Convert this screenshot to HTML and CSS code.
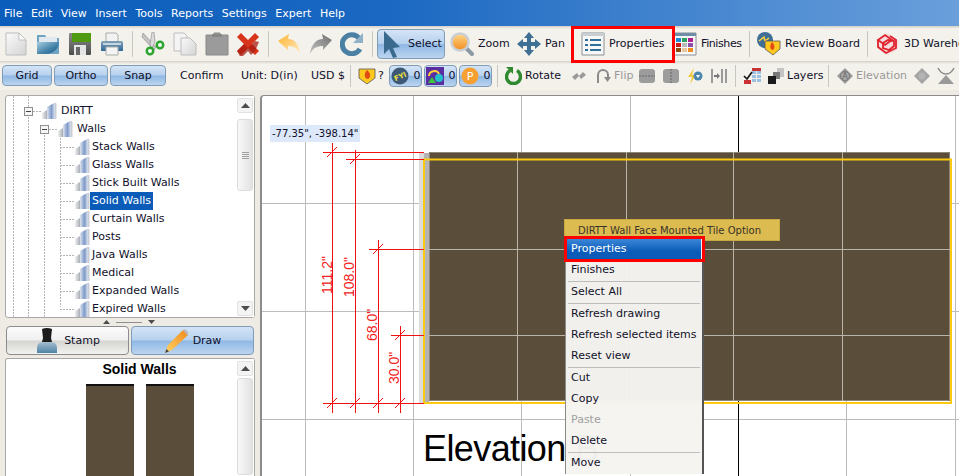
FILE: index.html
```html
<!DOCTYPE html>
<html lang="en">
<head>
<meta charset="utf-8">
<title>ICE Elevation</title>
<link rel="stylesheet" href="styles.css">
</head>
<body>
<svg class="defs" width="0" height="0" aria-hidden="true">
  <defs>
    <linearGradient id="page" x1="0" y1="0" x2="1" y2="1"><stop offset="0" stop-color="#fafafa"/><stop offset="1" stop-color="#d4d4d4"/></linearGradient>
    <linearGradient id="folder" x1="0" y1="0" x2="1" y2="1"><stop offset="0" stop-color="#a9cde0"/><stop offset=".6" stop-color="#3f7fa6"/><stop offset="1" stop-color="#1f5f8a"/></linearGradient>
    <linearGradient id="floppy" x1="0" y1="0" x2="0" y2="1"><stop offset="0" stop-color="#8a8a8a"/><stop offset="1" stop-color="#4e4e4e"/></linearGradient>
    <linearGradient id="steel" x1="0" y1="0" x2="0" y2="1"><stop offset="0" stop-color="#7f9fb8"/><stop offset="1" stop-color="#2f6a96"/></linearGradient>
    <linearGradient id="undo" x1="0" y1="0" x2="1" y2="1"><stop offset="0" stop-color="#ffb52e"/><stop offset="1" stop-color="#ffe9c4"/></linearGradient>
    <linearGradient id="redo" x1="1" y1="0" x2="0" y2="1"><stop offset="0" stop-color="#6e6e6e"/><stop offset="1" stop-color="#c4c4c4"/></linearGradient>
    <linearGradient id="glass" x1="0" y1="0" x2="0" y2="1"><stop offset="0" stop-color="#ffd98a"/><stop offset="1" stop-color="#f28a1e"/></linearGradient>
    <linearGradient id="wallic" x1="0" y1="0" x2="1" y2="0"><stop offset="0" stop-color="#dfe5ee"/><stop offset=".55" stop-color="#7f9aca"/><stop offset="1" stop-color="#dde3ec"/></linearGradient>
    <linearGradient id="walllow" x1="0" y1="0" x2="1" y2="0"><stop offset="0" stop-color="#f0f0f0"/><stop offset="1" stop-color="#a8adb5"/></linearGradient>
    <linearGradient id="pencil" x1="0" y1="1" x2="1" y2="0"><stop offset="0" stop-color="#ffd466"/><stop offset="1" stop-color="#f08a1a"/></linearGradient>
    <linearGradient id="stampbase" x1="0" y1="0" x2="0" y2="1"><stop offset="0" stop-color="#a4bdd0"/><stop offset="1" stop-color="#4f84a6"/></linearGradient>
    <symbol id="wall" viewBox="0 0 16 18">
      <path d="M1 17v-6l5-3v9z" fill="url(#walllow)"/>
      <path d="M6 17V5l8-4.500V17z" fill="url(#wallic)"/>
      <path d="M14 .5V17h1.500V1.500z" fill="#c9ced6"/>
    </symbol>
    <symbol id="upar" viewBox="0 0 9 5"><path d="M0 5 4.500 0 9 5z" fill="#4d4d4d"/></symbol>
    <symbol id="dnar" viewBox="0 0 9 5"><path d="M0 0h9L4.500 5z" fill="#4d4d4d"/></symbol>
  </defs>
</svg>

<div class="app">
  <nav class="menubar">
    <span>File</span><span>Edit</span><span>View</span><span>Insert</span><span>Tools</span><span>Reports</span><span>Settings</span><span>Expert</span><span>Help</span>
  </nav>

  <div class="toolbar tb-main">
    <div class="cell"><svg width="24" height="24" viewBox="0 0 24 24"><path d="M2 1h13l7 7v15H2z" fill="url(#page)" stroke="#bdbdbd"/><path d="M15 1v7h7z" fill="#fff" stroke="#bdbdbd"/></svg></div>
    <div class="cell"><svg width="24" height="24" viewBox="0 0 24 24"><path d="M1 3h8l2 3h12v16H1z" fill="#6fa3c4"/><path d="M3 5h18v6H3z" fill="#dfe9ef"/><path d="M1 22V10h22c0 6-5 12-14 12z" fill="url(#folder)"/></svg></div>
    <div class="cell"><svg width="24" height="24" viewBox="0 0 24 24"><path d="M1 2q0-1 1-1h21v21q0 1-1 1H2q-1 0-1-1z" fill="url(#floppy)"/><path d="M4 1h19v9H4z" fill="#4f9a10"/><path d="M6 13h12v10H6z" fill="#e4e4e4"/><path d="M8 15h4v8H8z" fill="#666"/></svg></div>
    <div class="cell"><svg width="24" height="24" viewBox="0 0 24 24"><path d="M6 1h10l2 2v8H6z" fill="#f2f2f2" stroke="#aaa"/><path d="M1 11q0-2 2-2h18q2 0 2 2v8H1z" fill="url(#steel)"/><path d="M6 15h12v8H6z" fill="#f4f4f4" stroke="#aaa"/><path d="M3 11h18v2H3z" fill="#c7d7e2"/></svg></div>
    <div class="cell"><i class="sep"></i></div>
    <div class="cell"><svg width="24" height="24" viewBox="0 0 24 24"><path d="M2 1 15 15l-2 3L1 5z" fill="#c4c4c4" stroke="#888" stroke-width=".6"/><path d="M11 0l2 0 1 10-3 6-2-3z" fill="#dcdcdc" stroke="#888" stroke-width=".6"/><circle cx="9" cy="19" r="3.200" fill="#fff" stroke="#2ea52e" stroke-width="2.500"/><circle cx="19" cy="13" r="3.200" fill="#fff" stroke="#2ea52e" stroke-width="2.500"/></svg></div>
    <div class="cell"><svg width="24" height="24" viewBox="0 0 24 24"><path d="M1 1h10l3 3v15H1z" fill="#f4f4f4" stroke="#bdbdbd"/><path d="M8 6h9l6 6v11H8z" fill="url(#page)" stroke="#bdbdbd"/></svg></div>
    <div class="cell"><svg width="24" height="24" viewBox="0 0 24 24"><path d="M1 3h8V1h6v2h8v20H1z" fill="#9b9b9b" stroke="#8a8a8a"/><path d="M7 2h10v3H7z" fill="#888"/></svg></div>
    <div class="cell"><svg width="24" height="24" viewBox="0 0 24 24"><path d="M1 5 5 1l7 7 7-7 4 4-7 7 7 7-4 4-7-7-7 7-4-4 7-7z" fill="#d8341c"/><path d="M1 19l7-7 4 4 7-7 4 1-4 9-4 4-3-4-7 7z" fill="#a81c10" opacity=".75"/></svg></div>
    <div class="cell"><i class="sep"></i></div>
    <div class="cell"><svg width="24" height="24" viewBox="0 0 24 24"><path d="M1 9 12 2l-1 5c7 0 11 6 12 15-3-6-6-8-12-8v4z" fill="url(#undo)"/></svg></div>
    <div class="cell"><svg width="24" height="24" viewBox="0 0 24 24"><path d="M23 8 13 2l1 5C7 7 2 13 1 22c3-6 7-8 13-8v4z" fill="url(#redo)"/></svg></div>
    <div class="cell"><svg width="24" height="24" viewBox="0 0 24 24"><path d="M20 17a9.500 9.500 0 1 1-1-11" fill="none" stroke="#4a80a4" stroke-width="5"/><path d="M23 1v10H13z" fill="#8fb2c8"/></svg></div>
    <div class="cell"><i class="sep"></i></div>
    <div class="cell"><div class="btn btn-select"><svg width="22" height="28" viewBox="0 0 22 28"><path d="M4 1 20 17l-7 1 4 9-4 1-4-9-5 5z" fill="#3a6a8e"/></svg><span>Select</span></div></div>
    <div class="cell tool"><svg width="24" height="24" viewBox="0 0 24 24"><path d="M15 15l7 7" stroke="#8c9aa6" stroke-width="4" stroke-linecap="round"/><circle cx="10" cy="10" r="8.500" fill="url(#glass)" stroke="#c9cfd4" stroke-width="2.500"/></svg><span>Zoom</span></div>
    <div class="cell tool"><svg width="24" height="24" viewBox="0 0 24 24"><g fill="#3d7094"><path d="M12 0l5 6H7z"/><path d="M12 24l-5-6h10z"/><path d="M0 12l6-5v10z"/><path d="M24 12l-6 5V7z"/><path d="M6 10h12v4H6z"/><path d="M10 6h4v12h-4z"/></g></svg><span>Pan</span></div>
    <div class="cell tool"><svg width="24" height="24" viewBox="0 0 24 24"><path d="M1 1h22v22H1z" fill="#f7f7f7" stroke="#8a8f94"/><path d="M1 1h22v3H1z" fill="#c9ced3"/><g fill="#2f6f9a"><path d="M4 7h3v2H4zM9 7h11v2H9zM4 12h3v2H4zM9 12h11v2H9zM4 17h3v2H4zM9 17h11v2H9z"/></g></svg><span>Properties</span></div>
    <div class="cell tool"><svg width="24" height="24" viewBox="0 0 24 24"><path d="M0 1h23v22H0z" fill="#f7f7f7" stroke="#8a8f94"/><path d="M1 1h22v3H1z" fill="#6f8ea6"/><path d="M3 6h5v4H3z" fill="#1e88d0"/><path d="M9 6h5v4H9z" fill="#30a060"/><path d="M15 6h5v4h-5z" fill="#b01e90"/><path d="M3 11h5v4H3z" fill="#c81818"/><path d="M9 11h5v4H9z" fill="#b8b8b8"/><path d="M15 11h5v4h-5z" fill="#8a4fa8"/><path d="M3 16h5v4H3z" fill="#8a4a10"/><path d="M9 16h5v4H9z" fill="#e8c8a0"/><path d="M15 16h5v4h-5z" fill="#f08a20"/></svg><span class="tight">Finishes</span></div>
    <div class="cell"><i class="sep"></i></div>
    <div class="cell tool"><svg width="24" height="24" viewBox="0 0 24 24"><circle cx="8" cy="8" r="8" fill="#3f6f96"/><path d="M2 9l5-4 1 4 4-3" fill="none" stroke="#ffd23c" stroke-width="1.500"/><path d="M8 9h15v8l-7 6-8-6z" fill="#ffc81e" stroke="#555" stroke-width=".8"/><path d="M15 10c3 3 3 6 1 8-3 0-4-4-1-8z" fill="#e04a14"/></svg><span>Review Board</span></div>
    <div class="cell"><i class="sep"></i></div>
    <div class="cell tool"><svg width="24" height="24" viewBox="0 0 24 24"><path d="M1 8 12 1l11 8-2 9-10 5-9-6z" fill="#f6dcdc"/><g fill="none" stroke="#e0202a" stroke-width="1.800"><path d="M2 8 9 3l7 5-7 5z"/><path d="M2 8v7l8 6 10-5V8l-6-4"/><path d="M7 11v5l6 2 5-4v-5l-6-1-5 3"/></g></svg><span>3D Warehouse</span></div>
  </div>

  <div class="toolbar tb-sub">
    <div class="cell"><div class="btn btn-grid">Grid</div></div>
    <div class="cell"><div class="btn btn-ortho">Ortho</div></div>
    <div class="cell"><div class="btn btn-snap">Snap</div></div>
    <div class="cell">Confirm</div>
    <div class="cell">Unit: D(in)</div>
    <div class="cell">USD $</div>
    <div class="cell"><i class="sep"></i></div>
    <div class="cell"><svg width="18" height="18" viewBox="0 0 18 18"><path d="M1 2h16v9l-8 6-8-6z" fill="#ffc81e" stroke="#555" stroke-width=".8"/><path d="M9 3c4 3 4 7 1 9-3 0-5-4-1-9z" fill="#e04a14"/></svg></div>
    <div class="cell">?</div>
    <div class="cell"><div class="btn btn-count"><svg width="18" height="18" viewBox="0 0 18 18"><circle cx="9" cy="9" r="8.500" fill="#3c5a78"/><text x="9" y="12" class="fyi" transform="rotate(-25 9 9)">FYI</text></svg><span>0</span></div></div>
    <div class="cell"><div class="btn btn-count"><svg width="18" height="18" viewBox="0 0 18 18"><path d="M0 0h18v18H0z" fill="#5a2da0"/><path d="M3 9c0-5 8-7 10-2" fill="none" stroke="#ffd23c" stroke-width="2"/><path d="M2 16l4-6 4 6z" fill="#3cc43c"/><circle cx="13" cy="11" r="4" fill="#22c0c8"/></svg><span>0</span></div></div>
    <div class="cell"><div class="btn btn-count"><svg width="18" height="18" viewBox="0 0 18 18"><circle cx="9" cy="9" r="8.500" fill="#f5a030"/><text x="9" y="13" class="pt">P</text></svg><span>0</span></div></div>
    <div class="cell"><i class="sep"></i></div>
    <div class="cell tool tool-sm"><svg width="17" height="18" viewBox="0 0 17 18"><path d="M12 3.500a7 7 0 1 1-7 0" fill="none" stroke="#2f8a2f" stroke-width="3.500"/><path d="M1 0h7v7z" fill="#2f8a2f"/></svg><span>Rotate</span></div>
    <div class="cell"><svg width="16" height="16" viewBox="0 0 16 16"><g fill="#9a9a9a"><path d="M1 9l5-4 2 3-4 4z"/><path d="M15 7l-5 4-2-3 4-4z"/></g></svg></div>
    <div class="cell tool tool-sm muted"><svg width="16" height="18" viewBox="0 0 16 18"><path d="M3 16V8a5 5 0 0 1 10 0v3" fill="none" stroke="#8a8a8a" stroke-width="2"/><path d="M9 10h7l-3.500 5z" fill="#8a8a8a"/></svg><span>Flip</span></div>
    <div class="cell"><svg width="16" height="16" viewBox="0 0 16 16"><rect x="0" y="1" width="16" height="14" rx="3" fill="#9c9c9c"/><path d="M0 8h16" stroke="#666" stroke-dasharray="2 1"/></svg></div>
    <div class="cell"><svg width="16" height="16" viewBox="0 0 16 16"><rect x="0" y="1" width="16" height="14" rx="3" fill="#9c9c9c"/><path d="M8 1v14" stroke="#666" stroke-dasharray="2 1"/></svg></div>
    <div class="cell"><svg width="16" height="16" viewBox="0 0 16 16"><path d="M7 0 1 9h4l-2 7 6-9H5z" fill="#f5c83c"/><circle cx="11" cy="8" r="4.500" fill="#4c86ad"/><path d="M9 7h4l-2 3z" fill="#fff"/></svg></div>
    <div class="cell"><svg width="16" height="16" viewBox="0 0 16 16"><path d="M1 1v14M11 1v14M15 1v14" stroke="#9a9a9a" stroke-width="2"/><path d="M3 7h3V5l3 3-3 3V9H3z" fill="#777"/></svg></div>
    <div class="cell"><i class="sep"></i></div>
    <div class="cell"><svg width="18" height="18" viewBox="0 0 18 18"><g fill="#9cc0e4"><path d="M9 4h4v3H9zM14 4h4v3h-4zM9 8h4v3H9zM14 8h4v3h-4zM9 12h4v3H9zM14 12h4v3h-4z"/></g><path d="M9 1h9v3H9zM1 13h7v4H1zM14 1h4v3h-4z" fill="#c83232"/><path d="M1 9l3 3 5-7" fill="none" stroke="#111" stroke-width="1.600"/></svg></div>
    <div class="cell tool tool-sm"><svg width="16" height="18" viewBox="0 0 16 18"><path d="M9 1h7v9H9z" fill="#c4c4c4"/><path d="M5 5h7v7H5z" fill="#7a7a7a"/><path d="M0 9h8v8H0z" fill="#1a1a1a"/></svg><span>Layers</span></div>
    <div class="cell"><i class="sep"></i></div>
    <div class="cell tool tool-sm muted"><svg width="16" height="16" viewBox="0 0 16 16"><path d="M8 0l8 8-8 8-8-8z" fill="#9c9c9c"/><circle cx="8" cy="8" r="4.500" fill="#aaa" stroke="#777"/><text x="8" y="11" class="elv">A</text></svg><span>Elevation</span></div>
    <div class="cell"><svg width="16" height="16" viewBox="0 0 16 16"><path d="M8 0l8 8-8 8-8-8z" fill="#a4a4a4"/><circle cx="8" cy="8" r="3.500" fill="#b4b4b4"/></svg></div>
    <div class="cell"><svg width="18" height="18" viewBox="0 0 18 18"><path d="M1 1c2 4 5 6 8 6s6-2 8-6" fill="none" stroke="#8a8a8a" stroke-width="1.500"/><path d="M9 8l8 9H1z" fill="#9a9a9a"/></svg></div>
  </div>

  <main class="workspace">
    <aside class="side">
      <section class="panel tree-panel">
        <div class="tree">
          <div class="row row-1"><i class="exp"></i><i class="dash"></i><svg class="ti" width="16" height="18"><use href="#wall"/></svg><span>DIRTT</span></div>
          <div class="row row-2"><i class="exp"></i><i class="dash"></i><svg class="ti" width="16" height="18"><use href="#wall"/></svg><span>Walls</span></div>
          <div class="row row-3"><i class="dash"></i><svg class="ti" width="16" height="18"><use href="#wall"/></svg><span>Stack Walls</span></div>
          <div class="row row-3"><i class="dash"></i><svg class="ti" width="16" height="18"><use href="#wall"/></svg><span>Glass Walls</span></div>
          <div class="row row-3"><i class="dash"></i><svg class="ti" width="16" height="18"><use href="#wall"/></svg><span>Stick Built Walls</span></div>
          <div class="row row-3"><i class="dash"></i><svg class="ti" width="16" height="18"><use href="#wall"/></svg><span class="sel">Solid Walls</span></div>
          <div class="row row-3"><i class="dash"></i><svg class="ti" width="16" height="18"><use href="#wall"/></svg><span>Curtain Walls</span></div>
          <div class="row row-3"><i class="dash"></i><svg class="ti" width="16" height="18"><use href="#wall"/></svg><span>Posts</span></div>
          <div class="row row-3"><i class="dash"></i><svg class="ti" width="16" height="18"><use href="#wall"/></svg><span>Java Walls</span></div>
          <div class="row row-3"><i class="dash"></i><svg class="ti" width="16" height="18"><use href="#wall"/></svg><span>Medical</span></div>
          <div class="row row-3"><i class="dash"></i><svg class="ti" width="16" height="18"><use href="#wall"/></svg><span>Expanded Walls</span></div>
          <div class="row row-3"><i class="dash"></i><svg class="ti" width="16" height="18"><use href="#wall"/></svg><span>Expired Walls</span></div>
        </div>
        <div class="scrollbar">
          <div class="sb-btn"><svg width="9" height="5"><use href="#upar"/></svg></div>
          <div class="sb-thumb sb-thumb-tree"><i></i><i></i><i></i><i></i></div>
          <div class="sb-track"></div>
          <div class="sb-btn"><svg width="9" height="5"><use href="#dnar"/></svg></div>
        </div>
      </section>

      <div class="splitter">
        <svg width="7" height="4"><use href="#upar"/></svg><i></i><svg width="7" height="4"><use href="#dnar"/></svg>
      </div>

      <div class="modes">
        <div class="mode"><svg width="24" height="26" viewBox="0 0 24 26"><path d="M7 1q5-2 10 0l-1 9 1 4H7l1-4z" fill="#1c1c1c"/><path d="M2 20q0-6 6-6h8q6 0 6 6v5H2z" fill="url(#stampbase)"/></svg><span>Stamp</span></div>
        <div class="mode mode-on"><svg width="24" height="26" viewBox="0 0 24 26"><path d="M1 25l3-8L19 2l5 5L8 22z" fill="url(#pencil)"/><path d="M19 2l2-1 3 3-0 3-1 0z" fill="#b8b8c0"/><path d="M1 25l1.500-4 2.500 2.500z" fill="#444"/></svg><span>Draw</span></div>
      </div>

      <section class="panel preview">
        <div class="pv-body">
          <h2>Solid Walls</h2>
          <div class="swatches"><div class="swatch"></div><div class="swatch"></div></div>
        </div>
        <div class="scrollbar">
          <div class="sb-btn"><svg width="9" height="5"><use href="#upar"/></svg></div>
          <div class="sb-thumb sb-thumb-pv"></div>
        </div>
      </section>
    </aside>

    <section class="canvas">
      <svg class="drawing" width="699" height="381" viewBox="260 95 699 381">
        <path class="grid" d="M305.500 95v381M413.500 95v381M521.500 95v381M630.500 95v381M846.500 95v381M955.500 95v381M260 203.500h699M260 311.500h699M260 419.500h699"/>
        <path d="M738.500 95v381" class="axis"/>
        <path d="M419 153h5v251h-5z" class="shade"/>
        <path d="M424 153h5v251h-5z" class="shade-in"/>
        <path d="M429 152h521v249H429z" class="wallface"/>
        <path d="M429.500 152.500h520v248h-520z" class="walledge"/>
        <path d="M517.500 152v249M626.500 152v249M733.500 152v249M842.500 152v249M429 249.500h521M429 335.500h521" class="tile"/>
        <path d="M424 159.500h527V403H424z" class="select"/>
        <g class="dims">
          <path d="M323 152.500h101M346 159.500h78M369 249.500h55M391 335.500h33M323 403.500h101"/>
          <path d="M332.500 143v270M355.500 150v263M378.500 240v173M400.500 326v87"/>
          <path d="M327 157l10-10M350 164l10-10M373 254l10-10M395 340l10-10M327 408l10-10M350 408l10-10M373 408l10-10M395 408l10-10"/>
        </g>
        <g class="dimtext">
          <text transform="translate(332 294) rotate(-90)">111.2"</text>
          <text transform="translate(354 297) rotate(-90)">108.0"</text>
          <text transform="translate(377 341) rotate(-90)">68.0"</text>
          <text transform="translate(399 384) rotate(-90)">30.0"</text>
        </g>
        <text x="423" y="461" class="view-title">Elevation B</text>
      </svg>

      <div class="coords">-77.35", -398.14"</div>
      <div class="hint">DIRTT Wall Face Mounted Tile Option</div>

      <ul class="menu">
        <li class="active">Properties</li>
        <li>Finishes</li>
        <li class="line"></li>
        <li>Select All</li>
        <li class="line"></li>
        <li>Refresh drawing</li>
        <li>Refresh selected items</li>
        <li>Reset view</li>
        <li class="line"></li>
        <li>Cut</li>
        <li>Copy</li>
        <li class="off">Paste</li>
        <li>Delete</li>
        <li class="line"></li>
        <li>Move</li>
      </ul>
    </section>
  </main>

  <div class="callout callout-tool"></div>
  <div class="callout callout-menu"></div>
</div>
</body>
</html>
```

FILE: styles.css
```css
* { box-sizing: border-box; }
html, body { margin: 0; padding: 0; }
body { background: #eeebe4; font: 11px "DejaVu Sans", sans-serif; color: #10102a; }
.defs { position: absolute; }
.app { position: relative; width: 959px; height: 476px; overflow: hidden; display: flex; flex-direction: column; }

.menubar {
  height: 26px; flex: none; display: flex; align-items: center; padding-left: 4px; gap: 8.5px; color: #fff;
  background: linear-gradient(90deg, #0a5dbb 0%, #1a68c2 40%, #6a9fdb 100%);
}

.toolbar { display: grid; flex: none; align-items: center; background: linear-gradient(#d2d0c8 0, #f4f2ec 3px, #f3f1ea 100%); overflow: hidden; }
.tb-main {
  height: 35px; padding-left: 4px;
  grid-template-columns: 32px 32px 32px 32px 9px 32px 32px 31px 32px 9px 32px 31px 32px 5px 73px 67px 64px 92px 76px 8px 110px 9px 140px;
}
.tb-sub {
  height: 29px; padding-left: 2px;
  grid-template-columns: 52px 56px 70px 61px 70px 39px 8px 20px 11px 35px 35px 38px 8px 66px 24px 44px 24px 24px 24px 24px 8px 25px 60px 9px 77px 23px 22px;
}
.cell { display: flex; align-items: center; white-space: nowrap; min-width: 0; }
.sep { display: block; width: 1px; height: 26px; background: #c9c6bd; }
.tb-sub .sep { height: 22px; }
.tool { gap: 4px; }
.tool-sm { gap: 3px; }
.tight { letter-spacing: -.4px; }
.muted { color: #999; }

.btn {
  display: flex; align-items: center; justify-content: center;
  border: 1px solid #7f9db9; border-radius: 4px;
  background: linear-gradient(#d4e4f6 0, #b7d1ee 48%, #8fb8e4 52%, #bcd4ef 100%);
}
.btn-select { width: 68px; height: 30px; gap: 6px; padding-left: 2px; justify-content: flex-start; }
.btn-grid { width: 50px; height: 21px; }
.btn-ortho { width: 54px; height: 21px; }
.btn-snap { width: 56px; height: 21px; }
.btn-count { width: 33px; height: 22px; gap: 5px; }
.fyi { font: bold 7px "DejaVu Sans", sans-serif; fill: #f0e040; text-anchor: middle; }
.pt { font: 11px "DejaVu Sans", sans-serif; fill: #fff; text-anchor: middle; }
.elv { font: 8px "DejaVu Sans", sans-serif; fill: #666; text-anchor: middle; }

.workspace { flex: 1; min-height: 0; display: flex; padding-top: 5px; }
.side { width: 260px; flex: none; padding-left: 5px; padding-right: 5px; display: flex; flex-direction: column; }
.panel { display: flex; background: #fff; border: 1px solid #a8a8a8; border-radius: 3px; }
.tree-panel { height: 223px; flex: none; }
.preview { flex: 1; min-height: 0; margin-top: 3px; border-bottom: 0; border-radius: 3px 3px 0 0; }

.tree {
  flex: 1; padding-top: 6px; overflow: hidden;
  background-image:
    repeating-linear-gradient(#b5b5b5 0 2px, transparent 2px 3px),
    repeating-linear-gradient(#b5b5b5 0 2px, transparent 2px 3px),
    repeating-linear-gradient(#b5b5b5 0 2px, transparent 2px 3px),
    repeating-linear-gradient(#b5b5b5 0 2px, transparent 2px 3px);
  background-repeat: no-repeat;
  background-size: 1px 100%, 1px 100%, 1px 100%, 1px 175px;
  background-position: 7px 0, 22px 0, 38px 36px, 54px 36px;
}
.row { height: 18px; display: flex; align-items: center; }
.row span { margin-left: 1px; padding: 0 3px; line-height: 18px; }
.row-1 { padding-left: 18px; }
.row-1 .dash, .row-2 .dash { width: 8px; }
.row-2 { padding-left: 34px; }
.row-3 { padding-left: 54px; }
.row-3 span { margin-left: 0; padding: 0 2px; }
.exp { width: 9px; height: 9px; flex: none; background: linear-gradient(#444, #444) center / 5px 1px no-repeat, #f6f6f6; border: 1px solid #8f8f8f; }
.dash { width: 5px; flex: none; height: 1px; background: repeating-linear-gradient(90deg, #b5b5b5 0 2px, transparent 2px 3px); }
.row-3 .dash { width: 14px; }
.ti { flex: none; }
.row .sel { background: #0a5cb8; color: #fff; }

.scrollbar { width: 18px; flex: none; padding: 2px 1px 1px; display: flex; flex-direction: column; background: #fff; }
.sb-btn { height: 15px; flex: none; display: flex; align-items: center; justify-content: center; background: #f4f4f4; border: 1px solid #e2e2e2; border-radius: 2px; }
.sb-thumb { margin-top: 6px; border: 1px solid #dcdcdc; border-radius: 3px; background: linear-gradient(90deg, #f8f8f8, #e2e2e2); display: flex; flex-direction: column; align-items: center; justify-content: center; gap: 1px; }
.sb-thumb i { display: block; width: 7px; height: 1px; background: #a0a0a0; }
.sb-thumb-tree { height: 72px; flex: none; }
.sb-thumb-pv { flex: 1; margin-top: 2px; }
.sb-track { flex: 1; }

.splitter { height: 6px; margin-top: 1px; flex: none; display: flex; align-items: center; justify-content: center; gap: 6px; padding-right: 2px; }
.splitter i { display: block; width: 26px; height: 1px; background: #8f8f8f; }

.modes { display: flex; gap: 2px; padding-left: 1px; margin-top: 1px; flex: none; }
.mode { width: 123px; height: 29px; display: flex; align-items: center; justify-content: center; gap: 5px; border: 1px solid #8c8c8c; border-radius: 4px; background: linear-gradient(#fbfbfb 0, #f0f0f0 48%, #d4d4d0 52%, #f2f2f0 100%); }
.mode-on { border-color: #7f9db9; background: linear-gradient(#d4e4f6 0, #b7d1ee 48%, #8fb8e4 52%, #bcd4ef 100%); }

.pv-body { flex: 1; min-width: 0; padding-left: 37px; }
.pv-body h2 { margin: 0; height: 25px; font: bold 14px/20px "Liberation Sans", sans-serif; color: #000; text-align: center; }
.swatches { display: flex; justify-content: center; gap: 12px; }
.swatch { width: 48px; height: 92px; background: #5a4e3a; border-top: 2px solid #111; }

.canvas { position: relative; flex: 1; min-width: 0; margin-top: 0; background: #fff; border-top: 1px solid #8c8c8c; border-left: 2px solid #8c8c8c; border-top-left-radius: 4px; overflow: hidden; }
.drawing { display: block; margin: -1px 0 0 -2px; }
.grid { stroke: #bcbcbc; fill: none; }
.axis { stroke: #000; fill: none; }
.shade { fill: #dcdcdc; }
.shade-in { fill: #b4b4b4; }
.wallface { fill: #5a4e3a; }
.walledge { fill: none; stroke: #8d8678; }
.tile { fill: none; stroke: #b8b4aa; }
.select { fill: none; stroke: #fbc90f; stroke-width: 2; }
.dims path { stroke: #f01010; fill: none; }
.dimtext text { font: 14px "Liberation Sans", sans-serif; fill: #f42020; }
.view-title { font: 36px "Liberation Sans", sans-serif; letter-spacing: -.6px; fill: #000; }

.coords { position: absolute; left: 8px; top: 29px; height: 17px; padding: 0 2px; font-size: 10px; line-height: 17px; background: #dde9fa; white-space: nowrap; }
.hint { position: absolute; left: 302px; top: 123px; width: 216px; height: 22px; padding-left: 13px; font-size: 10px; line-height: 21px; background: #dcbb50; border: 1px solid #c8a840; color: #3a3428; white-space: nowrap; }

.menu { position: absolute; left: 303px; top: 141px; width: 139px; margin: 0; padding: 2px 1px 0; list-style: none; background: rgba(246, 244, 241, .975); border-left: 1px solid #8a8a8a; border-right: 2px solid #555; }
.menu li { height: 21px; padding-left: 4px; line-height: 20px; white-space: nowrap; }
.menu .line { height: 1px; margin: 0 1px; padding: 0; background: #bdbdbd; }
.menu .active { color: #fff; background: linear-gradient(#3b86d8, #0a5cb8 60%); }
.menu .off { color: #a0a0a0; }

.callout { position: absolute; border: 3px solid #f00; }
.callout-tool { left: 571px; top: 26px; width: 104px; height: 37px; }
.callout-menu { left: 564px; top: 236px; width: 141px; height: 26px; }
```
